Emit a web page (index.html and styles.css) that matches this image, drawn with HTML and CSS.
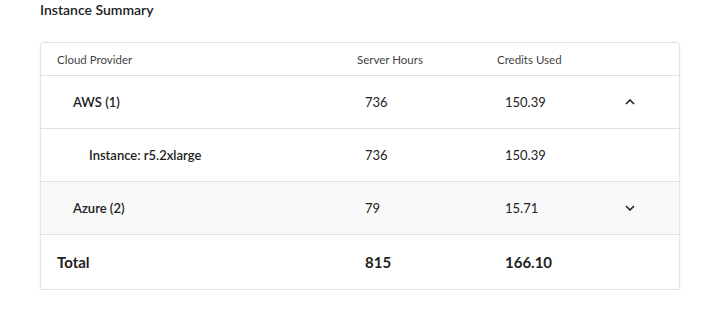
FILE: index.html
```html
<!DOCTYPE html>
<html>
<head>
<meta charset="utf-8">
<link rel="stylesheet" href="styles.css">
</head>
<body>
<div class="page">
  <h2 class="title">Instance Summary</h2>
  <div class="card">
    <div class="row head">
      <div class="cell c1">Cloud Provider</div>
      <div class="cell">Server Hours</div>
      <div class="cell">Credits Used</div>
      <div class="cell"></div>
    </div>
    <div class="row body">
      <div class="cell c1 lvl1">AWS (1)</div>
      <div class="cell num">736</div>
      <div class="cell num">150.39</div>
      <div class="cell icon"><svg width="10" height="6" viewBox="0 0 10 6"><path d="M1 5 L5 1 L9 5" fill="none" stroke="#222" stroke-width="1.6"/></svg></div>
    </div>
    <div class="row body">
      <div class="cell c1 lvl2">Instance: r5.2xlarge</div>
      <div class="cell num">736</div>
      <div class="cell num">150.39</div>
      <div class="cell"></div>
    </div>
    <div class="row body alt">
      <div class="cell c1 lvl1">Azure (2)</div>
      <div class="cell num">79</div>
      <div class="cell num">15.71</div>
      <div class="cell icon"><svg width="10" height="6" viewBox="0 0 10 6"><path d="M1 1 L5 5 L9 1" fill="none" stroke="#222" stroke-width="1.6"/></svg></div>
    </div>
    <div class="row total">
      <div class="cell c1">Total</div>
      <div class="cell num">815</div>
      <div class="cell num">166.10</div>
      <div class="cell"></div>
    </div>
  </div>
</div>
</body>
</html>
```
FILE: styles.css
```css
* { box-sizing: border-box; }
body {
  margin: 0;
  background: #fff;
  font-family: Lato, "Noto Sans", sans-serif;
  color: #222;
}
.page {
  padding: 2px 40px 0 40px;
}
.title {
  margin: 0;
  font-size: 14px;
  font-weight: 600;
  line-height: 16px;
  color: #222;
}
.card {
  margin-top: 24px;
  border: 1px solid #e3e3e3;
  border-radius: 3px;
  box-shadow: 0 1px 2px rgba(0,0,0,0.12);
  overflow: hidden;
}
.row {
  display: grid;
  grid-template-columns: 300px 140px 140px 1fr;
  align-items: center;
  border-bottom: 1px solid #e0e0e0;
}
.row:last-child { border-bottom: none; }
.cell { padding-left: 16px; }
.head {
  height: 33px;
  font-size: 11.5px;
  color: #444;
}
.body {
  height: 53px;
  font-size: 13px;
  color: #222;
}
.alt { background: #f9f9f9; }
.lvl1 { padding-left: 32px; font-weight: 600; }
.lvl2 { padding-left: 48px; font-weight: 600; }
.num { padding-left: 24px; }
.icon { padding-left: 4px; display: flex; align-items: center; }
.total {
  height: 54px;
  font-size: 15px;
  font-weight: 700;
}
```
